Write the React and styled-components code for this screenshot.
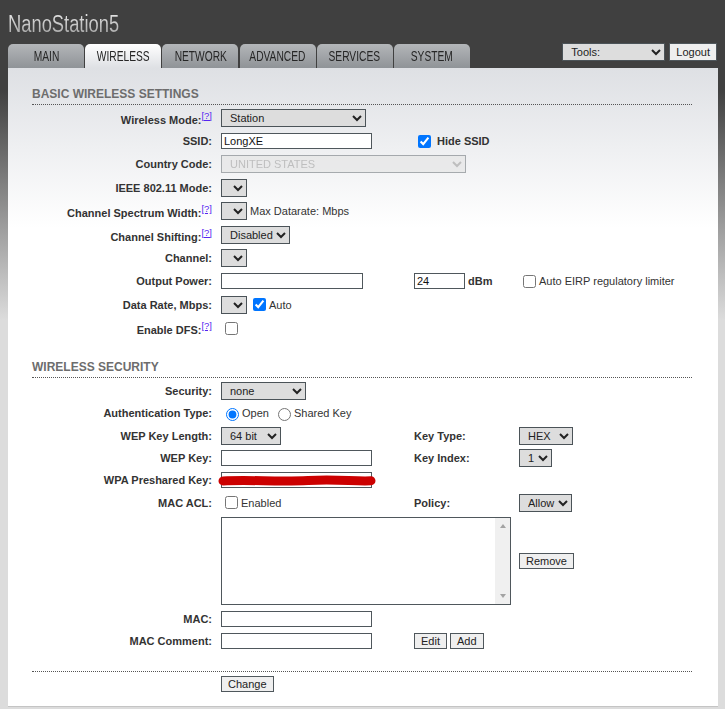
import React from 'react';
import styled, { createGlobalStyle } from 'styled-components';

const GlobalStyle = createGlobalStyle`
  html {
    background: #dcdcdc linear-gradient(to bottom, #404040 0px, #404040 90px, #dcdcdc 320px) no-repeat;
  }
  body {
    margin: 0;
    font-family: "Liberation Sans", Arial, sans-serif;
    font-size: 11px;
    color: #333;
  }
`;

const Page = styled.div`
  width: 710px;
  padding: 0 7px 0 8px;
`;

const Header = styled.div`
  padding-top: 11px;
  height: 26px;
`;

// no narrow face is installed, so the regular face is squeezed
const Title = styled.div`
  display: inline-block;
  font-family: "Liberation Sans", Arial, sans-serif;
  font-size: 23.5px;
  line-height: 26px;
  transform: scaleX(0.78);
  transform-origin: left center;
  background: linear-gradient(#ececec, #a0a0a0);
  -webkit-background-clip: text;
  background-clip: text;
  color: transparent;
`;

const NavRow = styled.div`
  display: flex;
  justify-content: space-between;
  align-items: flex-start;
  margin-top: 7px;
`;

const Tabs = styled.div`
  display: flex;
  gap: 1.2px;
`;

const Tab = styled.div`
  width: 76px;
  height: 24px;
  border-radius: 5px 5px 0 0;
  display: flex;
  align-items: center;
  justify-content: center;
  color: #262626;
  background: ${p => (p.$active ? 'linear-gradient(#ffffff, #dee0e4)' : 'linear-gradient(#b3b6b9, #8f9397)')};
`;

const TabLabel = styled.span`
  display: inline-block;
  font-family: "Liberation Sans", Arial, sans-serif;
  font-size: 14px;
  line-height: 16px;
  transform: scaleX(0.73);
`;

const Tools = styled.div`
  display: flex;
  gap: 4px;
  margin-top: -1px;
  margin-right: 1px;
`;

const Select = styled.select`
  box-sizing: border-box;
  width: ${p => p.$w}px;
  height: 18px;
  margin: 0;
  padding: 0 0 0 4px;
  font-family: "Liberation Sans", Arial, sans-serif;
  font-size: 11px;
  color: #222;
  background-color: #dddddd;
  border: 1px solid #4b5358;
  border-radius: 0;

  &:disabled {
    color: #a9a9a9;
    background-color: #e6e6e6;
    border-color: #868c90;
  }
`;

const Button = styled.button`
  box-sizing: border-box;
  height: ${p => p.$h || 16}px;
  margin: 0;
  padding: 0 6px;
  font-family: "Liberation Sans", Arial, sans-serif;
  font-size: 11px;
  color: #222;
  background: #efefef;
  border: 1px solid #4f575c;
  border-radius: 0;
`;

const Panel = styled.div`
  background: linear-gradient(to bottom, #dee0e4 0px, #ffffff 160px);
  padding: 19px 26px 14px 24px;
  border-bottom: 1px solid #c4c4c4;
`;

const SectionTitle = styled.div`
  margin-top: ${p => (p.$first ? 0 : 20)}px;
  padding-bottom: 3px;
  border-bottom: 1px dotted #555;
  font-size: 12px;
  line-height: 14px;
  font-weight: bold;
  color: #6d6d6d;
`;

const FormGrid = styled.div`
  display: grid;
  grid-template-columns: 189px 193px 105px 1fr;
  grid-auto-rows: minmax(${p => p.$row}px, auto);
  align-items: center;
  margin-top: ${p => p.$top}px;
`;

const Label = styled.div`
  padding-right: 9px;
  text-align: right;
  white-space: nowrap;
  font-weight: bold;
`;

const Help = styled.sup`
  font-size: 9.5px;
  font-weight: normal;
  color: #5626f0;
  text-decoration: underline;
`;

const Cell = styled.div`
  grid-column: span ${p => p.$span || 1};
  display: flex;
  align-items: center;
  white-space: nowrap;
`;

const Text = styled.span`
  margin-left: ${p => p.$ml || 0}px;
  font-weight: ${p => (p.$bold ? 'bold' : 'normal')};
`;

const Input = styled.input`
  box-sizing: border-box;
  width: ${p => p.$w}px;
  height: 16px;
  margin: 0;
  padding: 0 2px;
  font-family: "Liberation Sans", Arial, sans-serif;
  font-size: 11px;
  color: #111;
  background: #fff;
  border: 1px solid #4f575c;
  border-radius: 0;
`;

const Check = styled.input`
  width: 13px;
  height: 13px;
  margin: 3px 3px 3px ${p => p.$ml || 4}px;
`;

const Radio = styled.input`
  width: 13px;
  height: 13px;
  margin: 3px 3px 0 ${p => p.$ml || 5}px;
`;

const Hidden = styled.span`
  position: relative;
  display: inline-flex;
`;

const Scribble = styled.svg`
  position: absolute;
  left: -3px;
  top: 2px;
  width: 158px;
  height: 14px;
  pointer-events: none;
`;

const ListBox = styled.div`
  box-sizing: border-box;
  display: flex;
  width: 290px;
  height: 88px;
  margin: 3px 0;
  background: #fff;
  border: 1px solid #4f575c;
`;

const MacList = styled.textarea`
  flex: 1;
  margin: 0;
  padding: 2px;
  border: 0;
  outline: none;
  resize: none;
  background: transparent;
`;

const ScrollTrack = styled.div`
  width: 15px;
  background: #f0f0f0;
  display: flex;
  flex-direction: column;
  justify-content: space-between;
  align-items: center;
  padding: 6px 0;
`;

const Arrow = styled.span`
  width: 0;
  height: 0;
  border-left: 3.5px solid transparent;
  border-right: 3.5px solid transparent;
  ${p => (p.$down ? 'border-top' : 'border-bottom')}: 4px solid #a3a3a3;
`;

const Buttons = styled.div`
  display: flex;
  gap: 3px;
`;

const Separator = styled.div`
  margin-top: 19px;
  border-top: 1px dotted #555;
`;

const Footer = styled.div`
  padding: 4px 0 0 189px;
`;

const tabs = ['MAIN', 'WIRELESS', 'NETWORK', 'ADVANCED', 'SERVICES', 'SYSTEM'];

const App = () => {
  return (
    <Page>
      <GlobalStyle />
      <Header>
        <Title>NanoStation5</Title>
      </Header>
      <NavRow>
        <Tabs>
          {tabs.map(t => (
            <Tab key={t} $active={t === 'WIRELESS'}>
              <TabLabel>{t}</TabLabel>
            </Tab>
          ))}
        </Tabs>
        <Tools>
          <Select $w={103}>
            <option>Tools:</option>
          </Select>
          <Button $h={18}>Logout</Button>
        </Tools>
      </NavRow>

      <Panel>
        <SectionTitle $first>BASIC WIRELESS SETTINGS</SectionTitle>
        <FormGrid $row={23.4} $top={1}>
          <Label>Wireless Mode:<Help>[?]</Help></Label>
          <Cell $span={3}>
            <Select $w={145}><option>Station</option></Select>
          </Cell>

          <Label>SSID:</Label>
          <Cell><Input $w={151} defaultValue="LongXE" /></Cell>
          <Cell $span={2}>
            <Check type="checkbox" defaultChecked />
            <Text $bold $ml={3}>Hide SSID</Text>
          </Cell>

          <Label>Country Code:</Label>
          <Cell $span={3}>
            <Select $w={245} disabled><option>UNITED STATES</option></Select>
          </Cell>

          <Label>IEEE 802.11 Mode:</Label>
          <Cell $span={3}><Select $w={26} /></Cell>

          <Label>Channel Spectrum Width:<Help>[?]</Help></Label>
          <Cell $span={3}>
            <Select $w={26} />
            <Text $ml={3}>Max Datarate: Mbps</Text>
          </Cell>

          <Label>Channel Shifting:<Help>[?]</Help></Label>
          <Cell $span={3}>
            <Select $w={69}><option>Disabled</option></Select>
          </Cell>

          <Label>Channel:</Label>
          <Cell $span={3}><Select $w={26} /></Cell>

          <Label>Output Power:</Label>
          <Cell><Input $w={142} /></Cell>
          <Cell>
            <Input $w={51} defaultValue="24" />
            <Text $bold $ml={3}>dBm</Text>
          </Cell>
          <Cell>
            <Check type="checkbox" />
            <Text>Auto EIRP regulatory limiter</Text>
          </Cell>

          <Label>Data Rate, Mbps:</Label>
          <Cell $span={3}>
            <Select $w={26} />
            <Check type="checkbox" defaultChecked $ml={6} />
            <Text>Auto</Text>
          </Cell>

          <Label>Enable DFS:<Help>[?]</Help></Label>
          <Cell $span={3}><Check type="checkbox" /></Cell>
        </FormGrid>

        <SectionTitle>WIRELESS SECURITY</SectionTitle>
        <FormGrid $row={22.3} $top={2}>
          <Label>Security:</Label>
          <Cell $span={3}>
            <Select $w={85}><option>none</option></Select>
          </Cell>

          <Label>Authentication Type:</Label>
          <Cell $span={3}>
            <Radio type="radio" name="auth" defaultChecked />
            <Text>Open</Text>
            <Radio type="radio" name="auth" $ml={9} />
            <Text>Shared Key</Text>
          </Cell>

          <Label>WEP Key Length:</Label>
          <Cell><Select $w={60}><option>64 bit</option></Select></Cell>
          <Cell><Text $bold>Key Type:</Text></Cell>
          <Cell><Select $w={54}><option>HEX</option></Select></Cell>

          <Label>WEP Key:</Label>
          <Cell><Input $w={151} /></Cell>
          <Cell><Text $bold>Key Index:</Text></Cell>
          <Cell><Select $w={33}><option>1</option></Select></Cell>

          <Label>WPA Preshared Key:</Label>
          <Cell $span={3}>
            <Hidden>
              <Input $w={151} />
              <Scribble viewBox="0 0 158 14">
                <path
                  d="M5 7 C 30 5.5, 60 8, 90 6.5 S 135 7.5, 153 6.8"
                  fill="none"
                  stroke="#cc0000"
                  strokeWidth="9"
                  strokeLinecap="round"
                />
              </Scribble>
            </Hidden>
          </Cell>

          <Label>MAC ACL:</Label>
          <Cell>
            <Check type="checkbox" />
            <Text>Enabled</Text>
          </Cell>
          <Cell><Text $bold>Policy:</Text></Cell>
          <Cell><Select $w={53}><option>Allow</option></Select></Cell>

          <Label />
          <Cell $span={2}>
            <ListBox>
              <MacList />
              <ScrollTrack>
                <Arrow />
                <Arrow $down />
              </ScrollTrack>
            </ListBox>
          </Cell>
          <Cell><Button>Remove</Button></Cell>

          <Label>MAC:</Label>
          <Cell $span={3}><Input $w={151} /></Cell>

          <Label>MAC Comment:</Label>
          <Cell><Input $w={151} /></Cell>
          <Cell $span={2}>
            <Buttons>
              <Button>Edit</Button>
              <Button>Add</Button>
            </Buttons>
          </Cell>
        </FormGrid>

        <Separator />
        <Footer>
          <Button>Change</Button>
        </Footer>
      </Panel>
    </Page>
  );
};

export default App;
